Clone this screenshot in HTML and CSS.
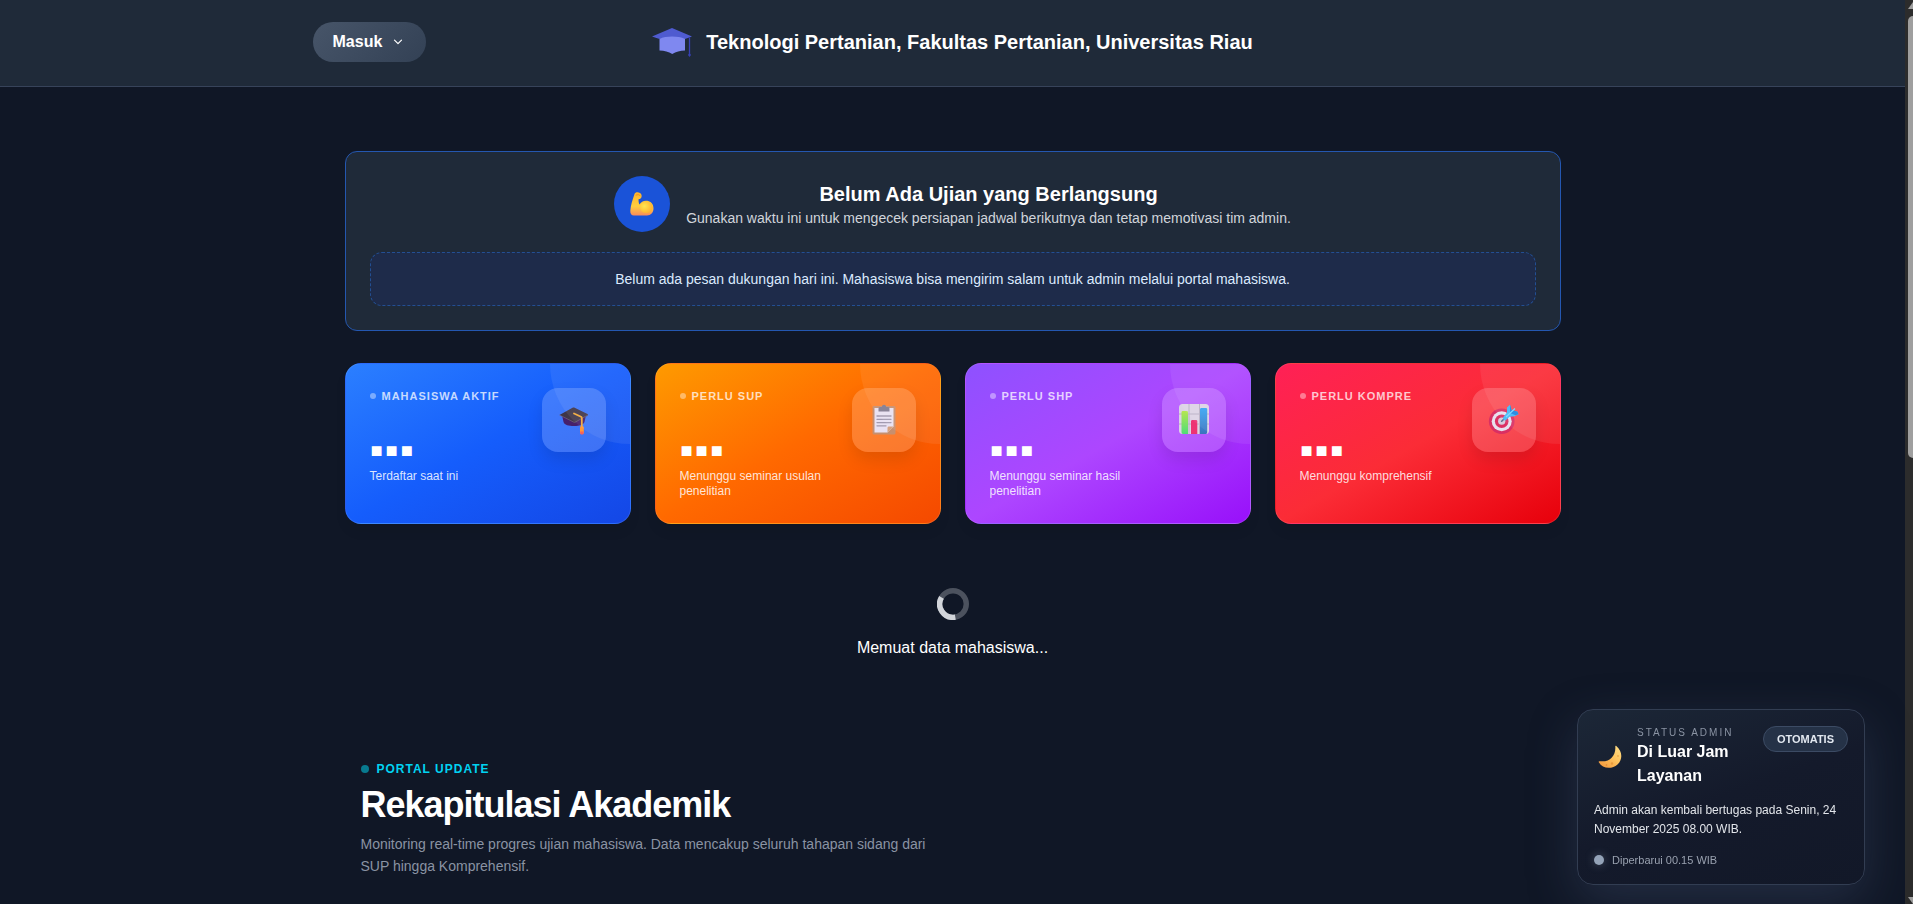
FILE: index.html
```html
<!DOCTYPE html>
<html lang="id">

<head>
    <meta charset="UTF-8">
    <meta name="viewport" content="width=device-width, initial-scale=1.0">
    <title>Teknologi Pertanian - Universitas Riau</title>
    <link rel="stylesheet" href="styles.css">
</head>

<body>
    <div class="page">
        <header class="header">
            <div class="header-inner">
                <button class="login-btn" type="button">
                    Masuk
                    <svg class="chevron" viewBox="0 0 10 10" aria-hidden="true"><path d="M1.500 3.200 5 6.700 8.500 3.200" fill="none" stroke="#fff" stroke-width="1.200" stroke-linecap="round" stroke-linejoin="round"/></svg>
                </button>
                <div class="brand">
                    <svg class="brand-icon" viewBox="0 0 44 36" aria-hidden="true">
                        <path d="M9.500 11h25.500v15.500c-5 0-9 1.500-12.750 3.500-3.750-2-7.750-3.500-12.750-3.500z" fill="#7f88f0"/>
                        <path d="M22 4 42 12.500 35 15c-7-3.200-19-3.200-25.500 0L2 12.500z" fill="#4f5bd0"/>
                        <path d="M39.500 13.500v16" stroke="#3740b4" stroke-width="1.300"/>
                        <path d="M39.500 28.500l1.500 2.500-1.500 2-1.500-2z" fill="#3740b4"/>
                    </svg>
                    <span>Teknologi Pertanian, Fakultas Pertanian, Universitas Riau</span>
                </div>
            </div>
        </header>

        <main class="container">
            <!-- info ujian -->
            <section class="banner">
                <div class="banner-top">
                    <div class="banner-icon">
                        <svg viewBox="0 0 24 24" width="26" height="26" aria-hidden="true">
                            <defs>
                                <linearGradient id="arm" x1="0" y1="0" x2="0" y2="1">
                                    <stop offset="0" stop-color="#ffb32c"/>
                                    <stop offset=".6" stop-color="#ffce3d"/>
                                    <stop offset="1" stop-color="#f98b5c"/>
                                </linearGradient>
                                <radialGradient id="biceps" cx=".35" cy=".4" r=".7">
                                    <stop offset="0" stop-color="#ffe650"/>
                                    <stop offset="1" stop-color="#ffad2b"/>
                                </radialGradient>
                            </defs>
                            <path d="M5 3C5.500 1.500 7 1 8.800 1.300c2.200.3 3.200 2 2.800 3.900-.3 1.500-1.400 2.300-2.700 2.200-.2 1.800 0 3.600.8 5 1.500-2.700 4.400-4 7.300-3.300 3.600.7 5.600 3.600 5.600 7 0 3.700-2.500 6.300-6 6.500H4.600C2.300 22.600 1 21 1.200 18.200 1.500 13.500 3.300 8 5 3z" fill="url(#arm)"/>
                            <ellipse cx="16" cy="15" rx="6" ry="5.400" fill="url(#biceps)"/>
                            <path d="M6.500 3.800c1.500-.8 3.300-.5 3.800.6" fill="none" stroke="#e98a1c" stroke-width=".8" stroke-linecap="round"/>
                        </svg>
                    </div>
                    <div class="banner-text">
                        <h2>Belum Ada Ujian yang Berlangsung</h2>
                        <p>Gunakan waktu ini untuk mengecek persiapan jadwal berikutnya dan tetap memotivasi tim admin.</p>
                    </div>
                </div>
                <p class="message">Belum ada pesan dukungan hari ini. Mahasiswa bisa mengirim salam untuk admin melalui portal mahasiswa.</p>
            </section>

            <!-- kartu statistik -->
            <section class="cards">
                <article class="card blue">
                    <div class="card-text">
                        <h3>Mahasiswa Aktif</h3>
                        <div class="value">■■■</div>
                        <p>Terdaftar saat ini</p>
                    </div>
                    <div class="card-icon">
                        <svg viewBox="0 0 32 32" width="32" height="32" aria-hidden="true">
                            <defs>
                                <linearGradient id="capTop" x1="0" y1="0" x2="1" y2="1">
                                    <stop offset="0" stop-color="#3c3345"/>
                                    <stop offset="1" stop-color="#453a4f"/>
                                </linearGradient>
                            </defs>
                            <path d="M4 11l1.500 7c1 3 5 4 10.500 4s9-1 10.500-4l1.500-7z" fill="#46206b"/>
                            <path d="M1.500 11 14.500 3.800c.8-.4 1.400-.4 2.200 0l13.300 6.500-.2 1.200L17.500 18.500c-.7.4-1.400.4-2 0z" fill="url(#capTop)"/>
                            <path d="M1.500 11 15.500 18c.8.4 1.300.4 2 0l12.400-7" fill="none" stroke="#7b6688" stroke-width=".6"/>
                            <path d="M16 9.500l7 3.200c.6.300.8.700.8 1.300v9" fill="none" stroke="#f2a93b" stroke-width="1.800" stroke-linecap="round"/>
                            <rect x="22" y="22" width="3.800" height="8" rx="1.600" fill="#ff9838"/>
                            <path d="M22.200 27.500h3.400v1.500c0 2-3.400 2-3.400 0z" fill="#f8605d"/>
                        </svg>
                    </div>
                </article>
                <article class="card orange">
                    <div class="card-text">
                        <h3>Perlu SUP</h3>
                        <div class="value">■■■</div>
                        <p>Menunggu seminar usulan penelitian</p>
                    </div>
                    <div class="card-icon">
                        <svg viewBox="0 0 32 32" width="32" height="32" aria-hidden="true">
                            <rect x="4.500" y="2" width="23" height="28.500" rx="1.500" fill="#c78f6e"/>
                            <path d="M6.500 4h19v18.500l-6 6h-13z" fill="#e9e1f2"/>
                            <path d="M25.500 22.500l-6 6v-4.500c0-1 .5-1.500 1.500-1.500z" fill="#d7a27e"/>
                            <path d="M10.500 7.500V4.500c0-1 .8-1.500 2-1.500h1.300c.3-3 4.100-3 4.400 0h1.300c1.200 0 2 .5 2 1.500v3z" fill="#827b90"/>
                            <path d="M9 12h14M9 15.300h14M9 18.600h14M9 21.800h9" stroke="#a199af" stroke-width="1.300" stroke-linecap="round"/>
                        </svg>
                    </div>
                </article>
                <article class="card purple">
                    <div class="card-text">
                        <h3>Perlu SHP</h3>
                        <div class="value">■■■</div>
                        <p>Menunggu seminar hasil penelitian</p>
                    </div>
                    <div class="card-icon">
                        <svg viewBox="0 0 32 32" width="32" height="32" aria-hidden="true">
                            <defs>
                                <linearGradient id="barGreen" x1="0" y1="0" x2="0" y2="1">
                                    <stop offset="0" stop-color="#b5e650"/>
                                    <stop offset="1" stop-color="#4fdc78"/>
                                </linearGradient>
                                <linearGradient id="barBlue" x1="0" y1="0" x2="0" y2="1">
                                    <stop offset="0" stop-color="#38a6f5"/>
                                    <stop offset="1" stop-color="#3c73bd"/>
                                </linearGradient>
                            </defs>
                            <rect x="1" y="0" width="30" height="30" rx="3.500" fill="#dcd3e5"/>
                            <path d="M11 0v30M21.500 0v30M1 10h30M1 20h30" stroke="#b9b0c4" stroke-width="1"/>
                            <path d="M3.500 8.500c0-1 .5-1.500 1.500-1.500h3.500c1 0 1.500.5 1.500 1.500V30H5c-1 0-1.500-1-1.500-2z" fill="url(#barGreen)"/>
                            <path d="M13 17.500c0-1 .5-1.500 1.500-1.500h3.300c1 0 1.500.5 1.500 1.500V30H13z" fill="#ed3373"/>
                            <path d="M22 5.500c0-1 .5-1.500 1.500-1.500h4.200c1 0 1.500.5 1.500 1.500V28c0 1-.5 2-1.500 2H22z" fill="url(#barBlue)"/>
                        </svg>
                    </div>
                </article>
                <article class="card red">
                    <div class="card-text">
                        <h3>Perlu Kompre</h3>
                        <div class="value">■■■</div>
                        <p>Menunggu komprehensif</p>
                    </div>
                    <div class="card-icon">
                        <svg viewBox="0 0 32 32" width="32" height="32" aria-hidden="true">
                            <circle cx="13.700" cy="17.200" r="12.800" fill="#d92f63"/>
                            <circle cx="13.700" cy="17.200" r="10" fill="#e8dfee"/>
                            <circle cx="13.700" cy="17.200" r="6.800" fill="#dc2f63"/>
                            <circle cx="13.700" cy="17.200" r="3.600" fill="#d6cbdc"/>
                            <path d="M13.700 17.200 19 12" stroke="#5b6d92" stroke-width="1.600" stroke-linecap="round"/>
                            <path d="M15 13.500l4-5 0-5 3-2.700 1.500 5 6 2 1 2.500-4 2-5 .5-4 3.700c-1.500.5-2.500-1.500-2.500-3z" fill="#42b9f8"/>
                            <path d="M22 .8l1.500 5 6 2 1 2.500-3 1-5.500-2.300z" fill="#1e86de"/>
                            <path d="M18 13l9-8.500" stroke="#7bd7ff" stroke-width="1.200"/>
                        </svg>
                    </div>
                </article>
            </section>

            <div class="loading" role="status">
                <svg viewBox="0 0 32 32" width="32" height="32" aria-hidden="true">
                    <circle cx="16" cy="16" r="13.300" fill="none" stroke="#4c525e" stroke-width="5.400"/>
                    <path d="M4.500 9.300A13.300 13.300 0 0 0 18.300 29.100" fill="none" stroke="#d2d5da" stroke-width="5.400"/>
                </svg>
                <p>Memuat data mahasiswa...</p>
            </div>

            <section class="recap">
                <div class="recap-label">Portal Update</div>
                <h1>Rekapitulasi Akademik</h1>
                <p>Monitoring real-time progres ujian mahasiswa. Data mencakup seluruh tahapan sidang dari SUP hingga Komprehensif.</p>
            </section>
        </main>
    </div>

    <!-- status admin, melayang di pojok -->
    <aside class="status">
        <div class="status-top">
            <div class="status-icon">
                <svg viewBox="0 0 24 24" width="24" height="24" aria-hidden="true">
                    <defs>
                        <linearGradient id="moon" x1="1" y1="0" x2=".2" y2="1">
                            <stop offset="0" stop-color="#ffe08a"/>
                            <stop offset=".5" stop-color="#ffc45e"/>
                            <stop offset="1" stop-color="#f39b3f"/>
                        </linearGradient>
                    </defs>
                    <path d="M18.300 1C24.500 6 25 14.500 19.500 19.500 14 24.500 4.500 24 .8 17.300c-.4-.8 0-1.300 1-1.100C12 17.500 18 10.500 17.300 1.500c0-.7.500-.9 1-.5z" fill="url(#moon)"/>
                    <circle cx="14" cy="18.500" r="1.200" fill="#e89a3c"/>
                    <circle cx="20" cy="11" r="1" fill="#eead4c"/>
                    <circle cx="8.500" cy="20" r=".8" fill="#db8434"/>
                </svg>
            </div>
            <div class="status-title">
                <div class="status-label">Status Admin</div>
                <h4>Di Luar Jam Layanan</h4>
            </div>
            <span class="badge">Otomatis</span>
        </div>
        <p class="status-text">Admin akan kembali bertugas pada Senin, 24 November 2025 08.00 WIB.</p>
        <div class="status-time">Diperbarui 00.15 WIB</div>
    </aside>

    <div class="scrollbar" aria-hidden="true">
        <svg class="arrow" viewBox="0 0 10 8"><path d="M0 7 5 0l5 7z" fill="#9f9f9f"/></svg>
        <div class="thumb"></div>
        <svg class="arrow" viewBox="0 0 10 8"><path d="M0 1l5 7 5-7z" fill="#9f9f9f"/></svg>
    </div>
</body>

</html>
```
FILE: styles.css
```css
* {
    box-sizing: border-box;
    margin: 0;
    padding: 0;
}

body {
    display: flex;
    height: 100vh;
    overflow: hidden;
    background: #101726;
    color: #fff;
    font-family: "Liberation Sans", Arial, sans-serif;
    font-size: 16px;
    line-height: 24px;
}

.page {
    flex: 1;
    min-width: 0;
    overflow: hidden;
}

.header {
    background: #1f2a39;
    border-bottom: 1px solid #37435a;
    padding: 22px 0 24px;
}

.header-inner {
    display: grid;
    grid-template-columns: 1fr auto 1fr;
    align-items: center;
    max-width: 1280px;
    margin: 0 auto;
}

.login-btn {
    display: flex;
    align-items: center;
    justify-self: start;
    gap: 11px;
    height: 40px;
    padding: 0 23px 0 20px;
    border: 0;
    border-radius: 20px;
    background: linear-gradient(135deg, #475569, #334155);
    color: #fff;
    font: bold 16px "Liberation Sans", Arial, sans-serif;
    cursor: pointer;
}

.chevron {
    width: 10px;
    height: 10px;
}

.brand {
    display: flex;
    align-items: center;
    gap: 12px;
    padding-right: 2px;
    font-size: 20px;
    font-weight: bold;
}

.brand-icon {
    width: 44px;
    height: 36px;
}

.container {
    max-width: 1280px;
    margin: 0 auto;
    padding: 64px 32px 0;
}

.banner {
    padding: 24px;
    border: 1px solid #2457b0;
    border-radius: 12px;
    background: #1f2a39;
    text-align: center;
}

.banner-top {
    display: flex;
    align-items: center;
    justify-content: center;
    gap: 16px;
}

.banner-icon {
    display: flex;
    align-items: center;
    justify-content: center;
    width: 56px;
    height: 56px;
    border-radius: 50%;
    background: #1a53d8;
}

.banner-text h2 {
    font-size: 20px;
    line-height: 28px;
}

.banner-text p {
    color: #d1d5db;
    font-size: 14px;
    line-height: 20px;
}

.message {
    margin-top: 20px;
    padding: 16px;
    border: 1px dashed #234f93;
    border-radius: 12px;
    background: #1e2b4a;
    color: #dbeafe;
    font-size: 14px;
    line-height: 20px;
}

.cards {
    display: grid;
    grid-template-columns: repeat(4, 1fr);
    gap: 24px;
    margin-top: 32px;
}

.card {
    position: relative;
    display: flex;
    justify-content: space-between;
    gap: 16px;
    padding: 24px;
    border: 1px solid rgba(255, 255, 255, 0.1);
    border-radius: 16px;
    overflow: hidden;
    box-shadow: 0 8px 12px rgba(0, 0, 0, 0.06);
}

.card::before {
    content: "";
    position: absolute;
    top: -80px;
    right: -80px;
    width: 160px;
    height: 160px;
    border-radius: 50%;
    background: rgba(255, 255, 255, 0.07);
}

.blue {
    background: linear-gradient(to bottom right, #2b7fff, #155dfc, #1447e6);
}

.orange {
    background: linear-gradient(to bottom right, #fe9a00, #ff6900, #f54900);
}

.purple {
    background: linear-gradient(to bottom right, #8e51ff, #ad46ff, #9810fa);
}

.red {
    background: linear-gradient(to bottom right, #ff2056, #fb2c36, #e7000b);
}

.card h3 {
    display: flex;
    align-items: center;
    gap: 6px;
    color: rgba(255, 255, 255, 0.75);
    font-size: 11px;
    line-height: 16px;
    letter-spacing: 1px;
    text-transform: uppercase;
    white-space: nowrap;
}

.card h3::before {
    content: "";
    width: 6px;
    height: 6px;
    border-radius: 50%;
    background: rgba(255, 255, 255, 0.4);
}

.value {
    margin-top: 28px;
    padding-left: 1px;
    font-size: 20px;
    font-weight: bold;
    line-height: 36px;
    letter-spacing: 3px;
}

.card p {
    min-height: 31px;
    color: rgba(255, 255, 255, 0.85);
    font-size: 12px;
    line-height: 15px;
    padding-top: 1px;
}

.card-icon {
    display: flex;
    align-items: center;
    justify-content: center;
    flex: none;
    width: 64px;
    height: 64px;
    border-radius: 16px;
    background: rgba(255, 255, 255, 0.18);
    box-shadow: 0 8px 16px rgba(0, 0, 0, 0.1);
}

.loading {
    display: flex;
    flex-direction: column;
    align-items: center;
    gap: 16px;
    margin-top: 64px;
}

.recap {
    margin-top: 99px;
    padding: 0 16px;
}

.recap-label {
    display: flex;
    align-items: center;
    gap: 8px;
    color: #00d3f2;
    font-size: 12px;
    font-weight: bold;
    line-height: 20px;
    letter-spacing: 1px;
    text-transform: uppercase;
}

.recap-label::before {
    content: "";
    width: 8px;
    height: 8px;
    border-radius: 50%;
    background: #087a8f;
}

.recap h1 {
    margin-top: 4px;
    font-size: 36px;
    line-height: 44px;
    letter-spacing: -1px;
}

.recap p {
    max-width: 576px;
    margin-top: 6px;
    color: #8a93a3;
    font-size: 14px;
    line-height: 22px;
}

.status {
    position: fixed;
    right: 48px;
    bottom: 19px;
    width: 288px;
    padding: 16px;
    border: 1px solid #323d52;
    border-radius: 16px;
    background: linear-gradient(160deg, #1c2737, #141a2b 50%, #121828);
    box-shadow: 0 16px 48px rgba(71, 85, 120, 0.35);
}

.status-top {
    display: flex;
    align-items: flex-start;
    gap: 11px;
}

.status-icon {
    display: flex;
    align-self: center;
    justify-content: center;
    width: 32px;
}

.status-title {
    flex: 1;
}

.status-label {
    color: #8a93a3;
    font-size: 10px;
    line-height: 14px;
    letter-spacing: 2px;
    text-transform: uppercase;
    white-space: nowrap;
}

.status h4 {
    font-size: 16px;
    line-height: 24px;
}

.badge {
    padding: 0 13px;
    border: 1px solid #3c4b64;
    border-radius: 13px;
    background: #253247;
    color: #e2e8f0;
    font-size: 11px;
    font-weight: bold;
    line-height: 24px;
    text-transform: uppercase;
}

.status-text {
    margin-top: 13px;
    color: #e2e5ea;
    font-size: 12px;
    line-height: 19px;
}

.status-time {
    display: flex;
    align-items: center;
    gap: 8px;
    margin-top: 13px;
    color: #99a1af;
    font-size: 11px;
    line-height: 16px;
}

.status-time::before {
    content: "";
    width: 10px;
    height: 10px;
    border-radius: 50%;
    background: #94a3b8;
    box-shadow: 0 0 10px rgba(148, 163, 184, 0.4);
}

.scrollbar {
    display: flex;
    flex-direction: column;
    width: 8px;
    padding: 2px 0 0 3px;
    overflow: hidden;
    background: #2c2c2c;
}

.arrow {
    flex: none;
    width: 10px;
    height: 8px;
}

.thumb {
    flex: none;
    width: 10px;
    height: 49%;
    margin: 6px 0 auto;
    border-radius: 5px;
    background: #9f9f9f;
}
```
